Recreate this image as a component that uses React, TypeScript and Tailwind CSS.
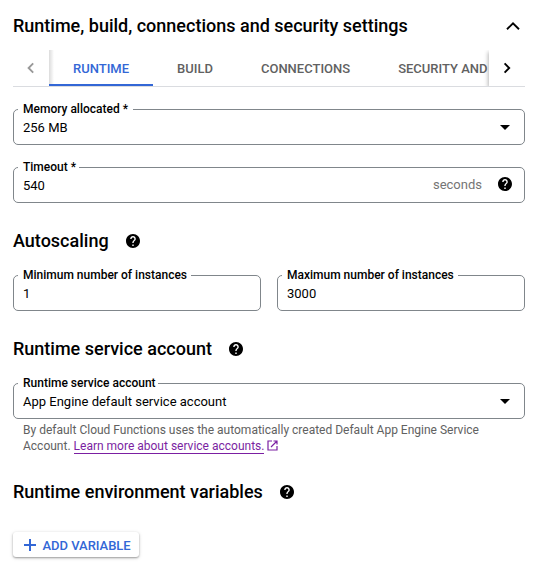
import type { ReactNode } from "react";

function HelpIcon({ className = "" }: { className?: string }) {
  return (
    <svg className={`block size-[14px] shrink-0 ${className}`} viewBox="2 2 20 20" aria-hidden="true">
      <path
        fill="#000"
        d="M12 2C6.48 2 2 6.48 2 12s4.48 10 10 10 10-4.48 10-10S17.52 2 12 2zm1 17h-2v-2h2v2zm2.07-7.75l-.9.92C13.45 12.9 13 13.5 13 15h-2v-.5c0-1.1.45-2.1 1.17-2.83l1.24-1.26c.37-.36.59-.86.59-1.41 0-1.1-.9-2-2-2s-2 .9-2 2H8c0-2.21 1.79-4 4-4s4 1.79 4 4c0 .88-.36 1.68-.93 2.25z"
      />
    </svg>
  );
}

function Caret() {
  return (
    <svg className="mr-[4px] block h-[5px] w-[10px]" viewBox="0 0 10 5" aria-hidden="true">
      <path fill="#000" d="M0 0h10L5 5z" />
    </svg>
  );
}

type FieldProps = { label: string; value: string; notch: string; children?: ReactNode };

function Field({ label, value, notch, children }: FieldProps) {
  return (
    <div className="relative flex h-9 flex-1 items-center rounded-[5px] border border-[#80868b] pr-[10px] pl-[9px]">
      <span
        className={`absolute -top-[8px] left-[4px] bg-white pl-[5px] text-[12px] leading-[14px] font-medium whitespace-nowrap ${notch}`}
      >
        {label}
      </span>
      <span className="flex-1 pt-[2px] text-[13px] leading-5">{value}</span>
      {children}
    </div>
  );
}

function SectionHeading({ title }: { title: string }) {
  return (
    <div className="flex h-6 items-center gap-[17px]">
      <h2 className="text-[18px] leading-6 font-medium">{title}</h2>
      <HelpIcon />
    </div>
  );
}

function Tab({ label, active = false }: { label: string; active?: boolean }) {
  return (
    <div
      className={
        active
          ? "flex h-9 shrink-0 items-center border-b-2 border-[#3367d6] px-6 pt-[4px] text-[#3367d6]"
          : "flex h-9 shrink-0 items-center px-6 pt-[2px] text-[#616161]"
      }
    >
      {label}
    </div>
  );
}

export default function App() {
  return (
    <main className="h-[572px] w-[544px] overflow-hidden bg-white pr-[19px] pl-[13px] font-[Roboto,sans-serif] text-black">
      <header className="flex items-center justify-between pt-[14px] pr-[5px]">
        <h1 className="text-[18px] leading-6 font-medium whitespace-nowrap">
          Runtime, build, connections and security settings
        </h1>
        <svg className="block h-[8px] w-[14px]" viewBox="0 0 14 8" fill="none" aria-hidden="true">
          <path d="M1 7.2l6-5.8 6 5.8" stroke="#000" strokeWidth="1.9" />
        </svg>
      </header>

      <nav className="mt-3 flex h-[37px] overflow-hidden border-b border-[#dadce0] text-[13px] font-medium">
        <div className="flex w-9 shrink-0 items-center justify-center">
          <svg className="block h-[12px] w-[8px]" viewBox="0 0 8 12" fill="none" aria-hidden="true">
            <path d="M6.2 1.4L1.6 6l4.6 4.6" stroke="#999" strokeWidth="1.9" />
          </svg>
        </div>
        <div className="flex w-[440px] overflow-hidden whitespace-nowrap bg-[linear-gradient(to_right,#00000024,#00000000_5px)]">
          <Tab label="RUNTIME" active />
          <Tab label="BUILD" />
          <Tab label="CONNECTIONS" />
          <Tab label="SECURITY AND" />
        </div>
        <div className="relative flex w-9 shrink-0 items-center justify-center bg-white shadow-[-1px_2px_4px_#00000048]">
          <svg className="block h-[12px] w-[8px]" viewBox="0 0 8 12" fill="none" aria-hidden="true">
            <path d="M1.6 1.4L6.2 6l-4.6 4.6" stroke="#000" strokeWidth="1.9" />
          </svg>
        </div>
      </nav>

      <div className="mt-[22px] flex">
        <Field label="Memory allocated *" value="256 MB" notch="pr-[5px]">
          <Caret />
        </Field>
      </div>

      <div className="mt-[22px] flex">
        <Field label="Timeout *" value="540" notch="pr-[3px]">
          <span className="mr-[16px] text-[13px] text-[#757575]">seconds</span>
          <HelpIcon className="mr-[2px] mb-[2px]" />
        </Field>
      </div>

      <section className="mt-[26px]">
        <SectionHeading title="Autoscaling" />
        <div className="mt-[22px] flex gap-4">
          <Field label="Minimum number of instances" value="1" notch="pr-[4px]" />
          <Field label="Maximum number of instances" value="3000" notch="pr-[4px]" />
        </div>
      </section>

      <section className="mt-[26px]">
        <SectionHeading title="Runtime service account" />
        <div className="mt-[22px] flex">
          <Field label="Runtime service account" value="App Engine default service account" notch="pr-[2px]">
            <Caret />
          </Field>
        </div>
        <p className="mt-[3px] pl-[10px] text-[12px] leading-4 text-[#616161]">
          By default Cloud Functions uses the automatically created Default App Engine Service
          <br />
          Account.{" "}
          <a className="border-b border-[#7b1fa2] text-[#7b1fa2]">Learn more about service accounts.</a>
          <svg className="ml-[3px] inline-block size-[11px] align-[-1px]" viewBox="0 0 11 11" fill="none" stroke="#7b1fa2" aria-hidden="true">
            <path d="M5 1H1v9h9V6M6.5 1H10v3.5M10 1L4 7" strokeWidth="1.2" />
          </svg>
        </p>
      </section>

      <section className="mt-[26px]">
        <SectionHeading title="Runtime environment variables" />
        <button className="mt-7 flex h-[25px] w-[126px] items-center rounded-[3px] pl-[11px] text-[13px] font-medium whitespace-nowrap text-[#3367d6] shadow-[0_1px_2px_#00000055,0_1px_4px_#00000020]">
          <svg className="mr-[6.5px] block size-[12px]" viewBox="0 0 12 12" aria-hidden="true">
            <path fill="#3367d6" d="M5 0h2v5h5v2H7v5H5V7H0V5h5z" />
          </svg>
          <span className="pt-[2px] tracking-[-0.03px]">ADD VARIABLE</span>
        </button>
      </section>
    </main>
  );
}
